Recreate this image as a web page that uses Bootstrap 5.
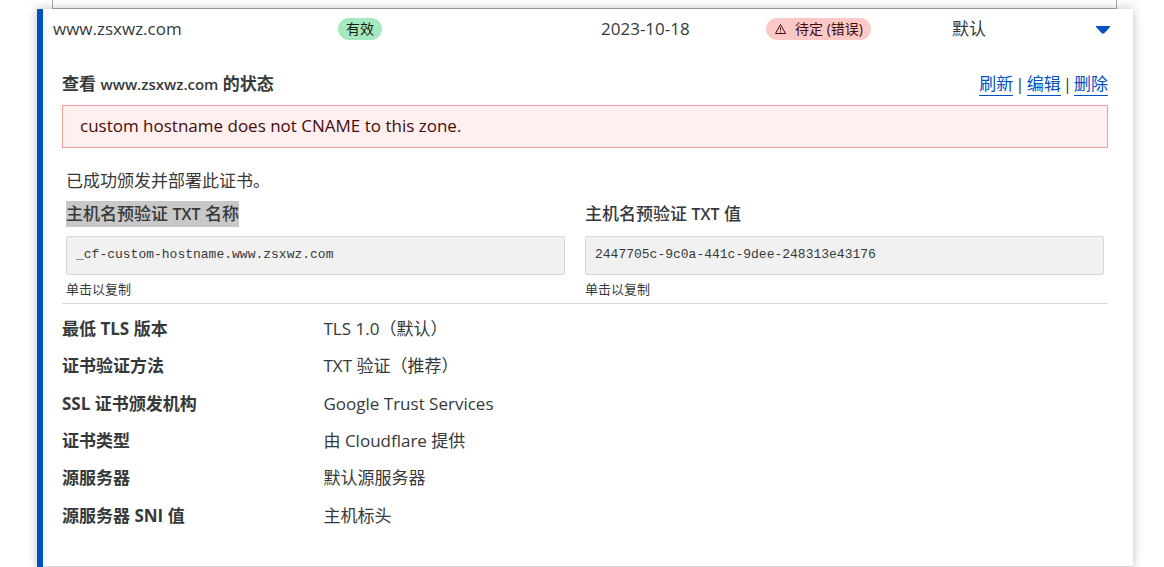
<!DOCTYPE html>
<html lang="zh-CN">
<head>
<meta charset="utf-8">
<meta name="viewport" content="width=device-width, initial-scale=1">
<title>自定义主机名</title>
<link href="https://cdn.jsdelivr.net/npm/bootstrap@5.3.0/dist/css/bootstrap.min.css" rel="stylesheet">
<style>
  body { font-family: "Open Sans", "Noto Sans CJK SC", sans-serif; font-size: 17px; line-height: 25px; color: #36393a; background: #fff; }
  .hosts { margin: 0 31px 0 37px; }
  /* lower edge of the preceding table row */
  .table-edge { height: 9px; margin: 0 16px 0 15px; border: 1px solid #aaa; border-top: 0; }
  .host-card { border-left: 6px solid #0051c3; background: #fff; box-shadow: 0 0 10px rgba(0, 0, 0, .25); }
  .summary { display: grid; grid-template-columns: 285fr 263fr 165fr 186fr 144fr 14px; align-items: center; padding: 7px 23px 8px 10px; }
  .status { display: inline-flex; align-items: center; height: 22px; padding: 0 8px; border-radius: 11px; font-size: 14px; line-height: 22px; }
  .status-ok { background: #a6e9c0; color: #0f2417; }
  .status-bad { background: #fcc9c7; color: #430c0b; }
  .toggle { width: 14px; height: 24px; line-height: 0; }
  .details { padding: 22px 25px 32px 19px; border-bottom: 1px solid #d5d7d8; }
  .title { font-size: 17px; line-height: 25px; }
  .title-host { font-size: 15px; }
  .actions { gap: 2px; }
  .actions a { color: #0051c3; text-decoration: none; border-bottom: 1px solid #0051c3; height: 25px; }
  .error-box { border: 1px solid #f79f9c; background: #ffefee; color: #430c0b; padding: 7px 17px 9px; margin-top: 8px; }
  .fields { padding: 20px 4px 5px; border-bottom: 1px solid #d5d7d8; }
  .field-a { padding-right: 20px; }
  .fields label { display: inline-block; font-weight: 500; }
  .label-latin { font-size: 16px; font-weight: 600; }
  .picked { background: #c8c8c8; }
  .code { width: 100%; height: 39px; border: 1px solid #d5d7d8; border-radius: 2px; background: #f1f1f1; color: #36393a; font: 13px "Liberation Mono", monospace; padding: 0 9px 3px; display: block; margin-top: 9px; }
  .copy { font-size: 13px; line-height: 18px; margin-top: 5px; border: 0; background: none; padding: 0; color: #36393a; display: block; }
  .props { display: grid; grid-auto-rows: 1fr; min-height: 224px; margin: 6px 0 0; align-items: center; }
</style>
</head>
<body>
<main class="hosts">
  <div class="table-edge"></div>
  <section class="host-card">
    <div class="summary">
      <div>www.zsxwz.com</div>
      <div class="d-flex"><span class="status status-ok">有效</span></div>
      <div>2023-10-18</div>
      <div class="d-flex"><span class="status status-bad"><svg class="me-2" width="13" height="12" viewBox="0 0 13 12" fill="none" stroke="#430c0b" aria-hidden="true"><path d="M6.500 1.500 1.500 10.500h10z" stroke-linejoin="round"/><path d="M6.500 4.500v3M6.500 8.500v1"/></svg>待定 (错误)</span></div>
      <div>默认</div>
      <button class="btn toggle p-0 border-0" type="button" aria-label="收起"><svg width="14" height="10" viewBox="0 0 14 10"><path d="M0 2h14v1L8 9.500H6L0 3z" fill="#0051c3"/></svg></button>
    </div>
    <div class="details">
      <div class="d-flex justify-content-between">
        <h1 class="m-0 fw-semibold title">查看 <span class="title-host">www.zsxwz.com</span> 的状态</h1>
        <div class="actions d-flex"><a href="#">刷新</a><span>|</span><a href="#">编辑</a><span>|</span><a href="#">删除</a></div>
      </div>
      <div class="error-box" role="alert">custom hostname does not CNAME to this zone.</div>
      <div class="fields">
        <div>已成功颁发并部署此证书。</div>
        <div class="row g-0 mt-2">
          <div class="col-6 field-a">
            <label class="picked" for="txtName">主机名预验证 <span class="label-latin">TXT</span> 名称</label>
            <input class="code" id="txtName" readonly value="_cf-custom-hostname.www.zsxwz.com">
            <button class="copy" type="button">单击以复制</button>
          </div>
          <div class="col-6">
            <label for="txtValue">主机名预验证 <span class="label-latin">TXT</span> 值</label>
            <input class="code" id="txtValue" readonly value="2447705c-9c0a-441c-9dee-248313e43176">
            <button class="copy" type="button">单击以复制</button>
          </div>
        </div>
      </div>
      <dl class="props">
        <div class="row g-0"><dt class="col-3">最低 TLS 版本</dt><dd class="col-9 m-0">TLS 1.0（默认）</dd></div>
        <div class="row g-0"><dt class="col-3">证书验证方法</dt><dd class="col-9 m-0">TXT 验证（推荐）</dd></div>
        <div class="row g-0"><dt class="col-3">SSL 证书颁发机构</dt><dd class="col-9 m-0">Google Trust Services</dd></div>
        <div class="row g-0"><dt class="col-3">证书类型</dt><dd class="col-9 m-0">由 Cloudflare 提供</dd></div>
        <div class="row g-0"><dt class="col-3">源服务器</dt><dd class="col-9 m-0">默认源服务器</dd></div>
        <div class="row g-0"><dt class="col-3">源服务器 SNI 值</dt><dd class="col-9 m-0">主机标头</dd></div>
      </dl>
    </div>
  </section>
</main>
<script src="https://cdn.jsdelivr.net/npm/bootstrap@5.3.0/dist/js/bootstrap.bundle.min.js"></script>
</body>
</html>
